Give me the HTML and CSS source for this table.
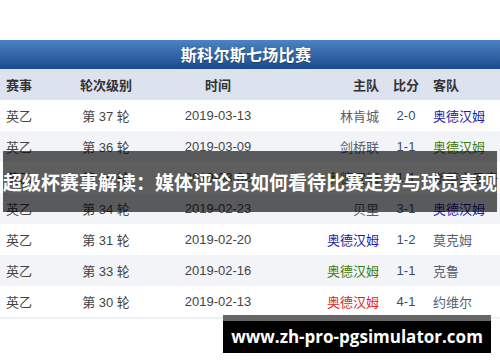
FILE: index.html
```html
<!DOCTYPE html>
<html lang="zh-CN">
<head>
<meta charset="UTF-8" />
<title>斯科尔斯七场比赛</title>
<link rel="stylesheet" href="styles.css">
</head>
<body>
<div class="page">
  <div class="board">
    <h2 class="board-title">斯科尔斯七场比赛</h2>
    <table class="matches">
      <thead>
        <tr>
          <th class="c-league">赛事</th>
          <th class="c-round">轮次级别</th>
          <th class="c-date">时间</th>
          <th class="c-home">主队</th>
          <th class="c-score">比分</th>
          <th class="c-away">客队</th>
        </tr>
      </thead>
      <tbody>
        <tr>
          <td class="c-league">英乙</td><td class="c-round">第 37 轮</td><td class="c-date">2019-03-13</td>
          <td class="c-home">林肯城</td><td class="c-score">2-0</td><td class="c-away team-lose">奥德汉姆</td>
        </tr>
        <tr>
          <td class="c-league">英乙</td><td class="c-round">第 36 轮</td><td class="c-date">2019-03-09</td>
          <td class="c-home">剑桥联</td><td class="c-score">1-1</td><td class="c-away team-draw">奥德汉姆</td>
        </tr>
        <tr>
          <td class="c-league">英乙</td><td class="c-round">第 35 轮</td><td class="c-date">2019-03-02</td>
          <td class="c-home team-draw">奥德汉姆</td><td class="c-score">1-1</td><td class="c-away">斯蒂文尼奇</td>
        </tr>
        <tr>
          <td class="c-league">英乙</td><td class="c-round">第 34 轮</td><td class="c-date">2019-02-23</td>
          <td class="c-home">贝里</td><td class="c-score">3-1</td><td class="c-away team-lose">奥德汉姆</td>
        </tr>
        <tr>
          <td class="c-league">英乙</td><td class="c-round">第 31 轮</td><td class="c-date">2019-02-20</td>
          <td class="c-home team-lose">奥德汉姆</td><td class="c-score">1-2</td><td class="c-away">莫克姆</td>
        </tr>
        <tr>
          <td class="c-league">英乙</td><td class="c-round">第 33 轮</td><td class="c-date">2019-02-16</td>
          <td class="c-home team-draw">奥德汉姆</td><td class="c-score">1-1</td><td class="c-away">克鲁</td>
        </tr>
        <tr>
          <td class="c-league">英乙</td><td class="c-round">第 30 轮</td><td class="c-date">2019-02-13</td>
          <td class="c-home team-win">奥德汉姆</td><td class="c-score">4-1</td><td class="c-away">约维尔</td>
        </tr>
      </tbody>
    </table>
  </div>

  <div class="headline">超级杯赛事解读：媒体评论员如何看待比赛走势与球员表现</div>
  <div class="watermark">www.zh-pro-pgsimulator.com</div>
</div>
</body>
</html>
```

FILE: styles.css
```css
body {
  margin: 0;
  background: #fff;
  font-family: "Noto Sans CJK SC", "Liberation Sans", sans-serif;
  color: #444;
}

.page {
  position: relative;
  width: 500px;
  height: 362px;
  overflow: hidden;
}

.board {
  padding-top: 40px;
}

.board-title {
  margin: 0;
  height: 29px;
  line-height: 29px;
  padding-right: 8px;
  text-align: center;
  font-size: 16px;
  font-weight: bold;
  color: #fff;
  letter-spacing: 0.3px;
  text-shadow: 0 1px 1px rgba(0, 0, 0, 0.35);
  background: linear-gradient(#4d83c2, #1b4a8e);
}

.matches {
  width: 500px;
  border-collapse: collapse;
  table-layout: fixed;
  font-size: 13px;
  border-bottom: 2px solid #eef0f5;
}

.matches th,
.matches td {
  height: 31px;
  padding: 0;
  white-space: nowrap;
  font-weight: normal;
}

.matches th {
  background: #dce2ee;
  color: #333;
  font-weight: bold;
}

.matches tbody tr:nth-child(even) td {
  background: #f2f4f8;
}

/* column widths */
.c-league { width: 64px; text-align: left; padding-left: 6px !important; }
.c-round  { width: 72px; text-align: center; }
.c-date   { width: 152px; text-align: center; }
.c-home   { width: 85px; text-align: right; }
.c-score  { width: 54px; text-align: center; }
.c-away   { text-align: left; }

td.c-date,
td.c-score,
td.c-round {
  font-family: "Liberation Sans", "Noto Sans CJK SC", sans-serif;
}

td.c-home,
td.c-away {
  color: #556070;
}

td.c-score {
  color: #3d4d60;
}

.matches td.team-lose { color: #1a1aa8; }
.matches td.team-draw { color: #3c7a12; }
.matches td.team-win  { color: #e01e1e; }

.headline {
  position: absolute;
  left: 3px;
  top: 151px;
  width: 494px;
  height: 61px;
  line-height: 61px;
  background: rgba(0, 0, 0, 0.63);
  color: #fff;
  font-size: 19px;
  font-weight: bold;
  white-space: nowrap;
  text-align: center;
}

.watermark {
  position: absolute;
  left: 223px;
  top: 315px;
  width: 268px;
  height: 32px;
  line-height: 32px;
  border-top: 6px solid #666;
  background: #000;
  color: #fff;
  font-family: "Open Sans", sans-serif;
  font-size: 17px;
  font-weight: bold;
  text-align: center;
}
```
